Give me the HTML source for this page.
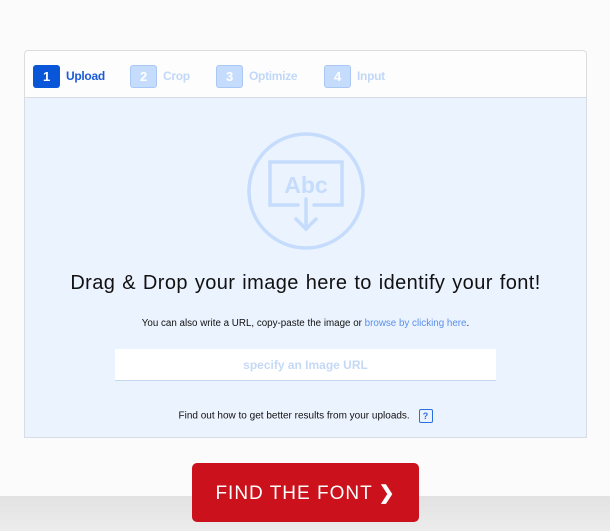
<!DOCTYPE html>
<html><head><style>
body{margin:0;width:610px;height:531px;background:#fbfbfb;font-family:"Liberation Sans",sans-serif;position:relative;overflow:hidden}
.band{position:absolute;left:0;top:496px;width:610px;height:35px;background:linear-gradient(#e2e2e2,#ececec)}
.tabs{position:absolute;left:24px;top:50px;width:561px;height:46px;border:1px solid #ddd;border-bottom:none;border-radius:4px 4px 0 0;background:#fdfdfd}
.tab{position:absolute;top:13px;height:24px;display:flex;align-items:center;font-size:12px;font-weight:bold;letter-spacing:-0.3px}
.num{width:27px;height:23px;border-radius:3px;display:flex;align-items:center;justify-content:center;color:#fff;font-size:13px;margin-right:6px;box-sizing:border-box}
.drop{position:absolute;left:24px;top:97px;width:561px;height:339px;border:1px solid #d8dde5;background:#ebf3ff}
h1{position:absolute;left:0;width:100%;top:174px;margin:0;text-align:center;font-weight:normal;font-size:20px;letter-spacing:0.4px;word-spacing:1px;color:#111}
.sub{position:absolute;width:100%;top:220px;text-align:center;font-size:9.8px;color:#111}
.sub a{color:#5a8fea}
.inp{position:absolute;left:90px;top:251px;width:381px;height:31px;background:#fff;border-bottom:1px solid #c5d8f2;color:#c5d9f7;font-size:12px;font-weight:bold;text-align:center;line-height:33px}
.tip{position:absolute;width:100%;top:311px;text-align:center;font-size:10px;color:#111}
.q{display:inline-block;width:12px;height:12px;border:1px solid #2a6fe0;color:#2a6fe0;font-size:9px;font-weight:bold;line-height:12px;margin-left:6px;vertical-align:middle;border-radius:2px}
.btn{position:absolute;left:192px;top:463px;width:227px;height:59px;background:#cb111b;border-radius:5px;color:#fff;font-size:19px;letter-spacing:1px;text-align:center;line-height:61px}
</style></head><body>
<div class="band"></div>
<div class="tabs">
<div class="tab" style="left:8px;color:#1b5ad8"><div class="num" style="background:#0a56d8">1</div>Upload</div>
<div class="tab" style="left:105px;color:#c1d8f9"><div class="num" style="background:#c5dcfc;border:1px solid #a9c8f6">2</div>Crop</div>
<div class="tab" style="left:191px;color:#c1d8f9"><div class="num" style="background:#c5dcfc;border:1px solid #a9c8f6">3</div>Optimize</div>
<div class="tab" style="left:299px;color:#c1d8f9"><div class="num" style="background:#c5dcfc;border:1px solid #a9c8f6">4</div>Input</div>
</div>
<div class="drop">
<svg style="position:absolute;left:221px;top:33px" width="120" height="120" viewBox="0 0 120 120" fill="none" stroke="#c5dcfc" stroke-width="3.5" stroke-linecap="round">
<circle cx="60" cy="60" r="57"/>
<path d="M52 74H24V31H96V74H68"/>
<path d="M60 68V98M50 88L60 98L70 88"/>
<text x="60" y="62" text-anchor="middle" fill="#c5dcfc" stroke="none" font-family="Liberation Sans" font-weight="bold" font-size="23">Abc</text>
</svg>
<h1>Drag &amp; Drop your image here to identify your font!</h1>
<div class="sub">You can also write a URL, copy-paste the image or <a>browse by clicking here</a>.</div>
<div class="inp">specify an Image URL</div>
<div class="tip">Find out how to get better results from your uploads. <span class="q">?</span></div>
</div>
<div class="btn">FIND THE FONT <b>&#x276F;</b></div>
</body></html>
